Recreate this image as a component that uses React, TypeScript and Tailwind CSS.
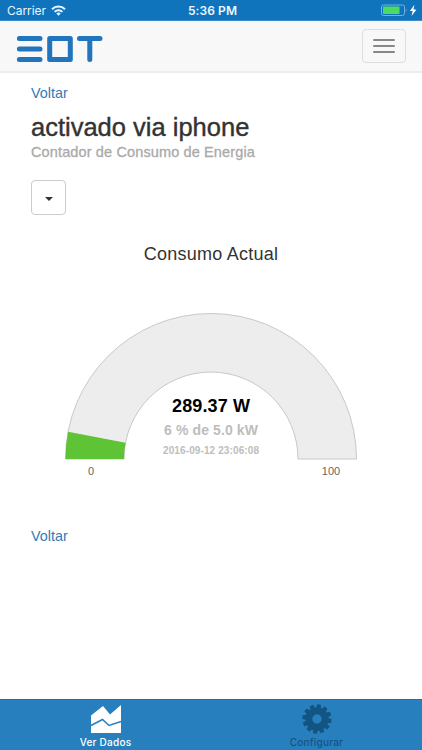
const CX = 147;
const CY = 147;
const OUTER = 145.5;
const INNER = 87;

function polar(radius: number, value: number) {
  const angle = Math.PI * (1 - value / 100);
  return `${(CX + radius * Math.cos(angle)).toFixed(2)} ${(CY - radius * Math.sin(angle)).toFixed(2)}`;
}

function arcBand(value: number) {
  return `M${polar(OUTER, 0)} A${OUTER} ${OUTER} 0 0 1 ${polar(OUTER, value)} L${polar(INNER, value)} A${INNER} ${INNER} 0 0 0 ${polar(INNER, 0)} Z`;
}

function StatusBar() {
  return (
    <div className="grid h-[21px] grid-cols-3 items-center border-b border-[#3d8dc8] bg-[#1074bc] pl-[7px] pr-[4px] pt-px font-['Inter',sans-serif] text-[12px] text-[#eaf7ff]">
      <div className="flex items-center gap-[5px]">
        <span className="tracking-[-0.05px]">Carrier</span>
        <svg className="h-[11px] w-[15px]" viewBox="0 0 15 11" fill="none" stroke="currentColor" strokeWidth="2">
          <path d="M1 4.3a9.2 9.2 0 0 1 13 0" />
          <path d="M3.6 6.9a5.6 5.6 0 0 1 7.8 0" />
          <path d="M7.5 10.8 5.3 8.6a3.1 3.1 0 0 1 4.4 0Z" fill="currentColor" stroke="none" />
        </svg>
      </div>
      <span className="text-center font-semibold tracking-[0.1px]">5:36 PM</span>
      <svg className="h-[13px] w-[38px] justify-self-end" viewBox="0 0 38 13">
        <rect x="1.5" y="1" width="23" height="10.5" rx="2" fill="none" stroke="#6fb2df" />
        <rect x="3" y="2.5" width="16.5" height="7.5" rx="0.5" fill="#4cd964" />
        <path d="M25.8 4.5q1.8 1.8 0 3.6Z" fill="#6fb2df" />
        <path d="M34.4.8 29.9 7.1h2.8l-1.2 4.9 5-6.6h-3Z" fill="#fff" />
      </svg>
    </div>
  );
}

function Navbar() {
  return (
    <header className="flex h-[52px] items-start justify-between border-b-2 border-[#ededed] bg-[#f8f8f8] pl-[16px] pr-[16px]">
      <svg
        className="mt-[14px] h-[29px] w-[88px]"
        viewBox="0 0 88 29"
        fill="none"
        stroke="#2075bc"
        strokeWidth="5"
        strokeLinecap="round"
        strokeLinejoin="round"
      >
        <path d="M3.4 3.5H24M3.4 14H24M3.4 24.5H24M33.7 3.5h20.6v21H33.7ZM63.5 3.5H84M73.8 3.5v21" />
      </svg>
      <button
        className="mt-[8px] flex h-[34px] w-[44px] flex-col items-center justify-center gap-[4px] rounded-[4px] border border-[#ddd]"
        aria-label="Menu"
      >
        <span className="h-[2px] w-[22px] rounded-[1px] bg-[#888]" />
        <span className="h-[2px] w-[22px] rounded-[1px] bg-[#888]" />
        <span className="h-[2px] w-[22px] rounded-[1px] bg-[#888]" />
      </button>
    </header>
  );
}

function Gauge() {
  return (
    <svg className="mx-auto mt-[46px] h-[168px] w-[294px]" viewBox="0 0 294 168" textAnchor="middle">
      <path d={arcBand(100)} fill="#ededed" stroke="#c8c8c8" />
      <path d={arcBand(6)} fill="#5fc336" />
      <g fontWeight="bold">
        <text x="147" y="99.5" fontSize="18" fill="#000" textLength="78">289.37 W</text>
        <text x="147" y="123" fontSize="14" fill="#bdbdbd" textLength="94">6 % de 5.0 kW</text>
        <text x="147" y="142" fontSize="10" fill="#bdbdbd" textLength="96">2016-09-12 23:06:08</text>
      </g>
      <text x="27" y="163" fontSize="11" fill="#666">0</text>
      <text x="267" y="163" fontSize="11" fill="#666">100</text>
    </svg>
  );
}

function GearIcon() {
  const teeth = Array.from({ length: 12 }, (_, i) => i * 30);
  return (
    <svg className="h-[30px] w-[30px]" viewBox="-15 -15 30 30" fill="#125482">
      <circle r="8.1" fill="none" stroke="#125482" strokeWidth="6.8" />
      {teeth.map((angle) => (
        <path key={angle} d="M-2.5-10.5-1.9-14.6h3.8l.6 4.1Z" transform={`rotate(${angle + 8})`} />
      ))}
    </svg>
  );
}

function TabBar() {
  return (
    <nav className="grid h-[51px] grid-cols-2 border-t border-[#216da6] bg-[#287fbe] font-['Inter',sans-serif] text-[10px] font-medium leading-[12px]">
      <button className="flex flex-col items-center pt-[3px] text-white">
        <svg className="h-[32px] w-[32px]" viewBox="0 0 32 32">
          <path d="M1 12.5 13 3 20 11.5 31 2v28H1Z" fill="#fff" />
          <path d="M1 22.5 12.5 16.5 19 22.5 31 18.5" fill="none" stroke="#287fbe" strokeWidth="1.5" />
        </svg>
        <span className="mt-px tracking-[0.25px]">Ver Dados</span>
      </button>
      <button className="flex flex-col items-center pt-[4px] text-[#125482]">
        <GearIcon />
        <span className="mt-[2px] tracking-[0.2px]">Configurar</span>
      </button>
    </nav>
  );
}

export default function App() {
  return (
    <div className="flex h-[750px] w-[422px] flex-col overflow-hidden bg-white font-['Liberation_Sans',sans-serif]">
      <StatusBar />
      <Navbar />
      <main className="flex flex-1 flex-col items-start px-[31px] pt-[10px]">
        <a className="text-[14.4px] leading-[20px] text-[#337ab7]">Voltar</a>
        <h1 className="mt-[10px] text-[25.5px] leading-[28px] text-[#333] [-webkit-text-stroke:0.4px_#333]">
          activado via iphone
        </h1>
        <h2 className="mt-[3px] text-[14.5px] leading-[17px] tracking-[0.13px] text-[#aaa] [-webkit-text-stroke:0.3px_#aaa]">
          Contador de Consumo de Energia
        </h2>
        <button
          className="mt-[19px] flex h-[35px] w-[35px] items-center justify-center rounded-[4px] border border-[#ccc]"
          aria-label="Opções"
        >
          <span className="mt-[2px] h-0 w-0 border-x-4 border-t-4 border-x-transparent border-t-[#333]" />
        </button>
        <div className="mt-[27px] w-full">
          <p className="text-center text-[18px] leading-[24px] tracking-[0.25px] text-[#333]">Consumo Actual</p>
          <Gauge />
        </div>
        <a className="mt-[46px] text-[14.4px] leading-[20px] text-[#337ab7]">Voltar</a>
      </main>
      <TabBar />
    </div>
  );
}
